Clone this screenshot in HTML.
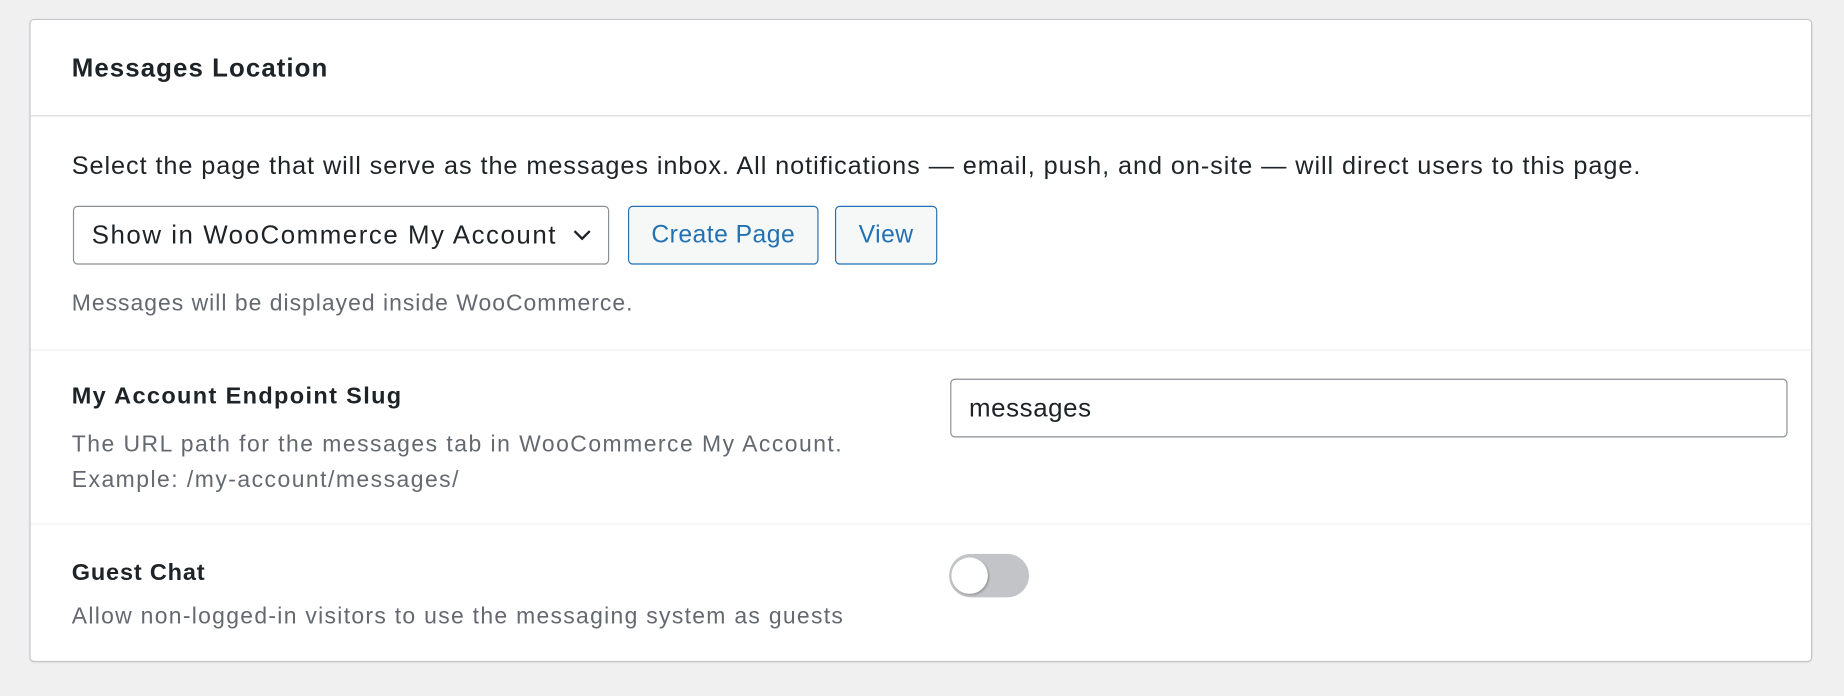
<!DOCTYPE html>
<html><head><meta charset="utf-8"><style>
html,body{margin:0;padding:0;background:#f0f0f1;width:1844px;height:696px;overflow:hidden}
#w{position:absolute;left:0;top:0;width:1568px;height:592px;transform:scale(1.17602);transform-origin:0 0;font-family:"Liberation Sans",sans-serif;color:#1d2327}
.card{position:absolute;left:25px;top:16px;width:1514px;height:545px;background:#fff;border:1px solid #c3c4c7;border-radius:4px;box-shadow:0 1px 1px rgba(0,0,0,.04)}
.abs{position:absolute;white-space:nowrap}
.hr{position:absolute;left:0;right:0;height:1px;background:#e0e0e0}
.btn{position:absolute;border:1px solid #2271b1;border-radius:4px;background:#f6f7f7;color:#2271b1;font-size:21px;letter-spacing:.4px;display:flex;align-items:center;justify-content:center;box-sizing:border-box}
.gray{color:#646970;font-size:19.5px;letter-spacing:.85px}
</style></head><body><div id="w">
<div class="card">
 <div class="abs" style="left:35px;top:28px;font-size:22px;font-weight:bold;letter-spacing:.9px">Messages Location</div>
 <div class="hr" style="top:81px;background:#dcdcde"></div>
 <div class="abs" style="left:35px;top:112px;font-size:21.5px;letter-spacing:.78px">Select the page that will serve as the messages inbox. All notifications — email, push, and on-site — will direct users to this page.</div>
 <div class="abs" style="left:36px;top:158px;border:1px solid #8c8f94;border-radius:4px;font-size:22px;letter-spacing:1.3px;line-height:48px;padding-left:15px;box-sizing:border-box;width:456px;height:50px">Show in WooCommerce My Account
  <svg style="position:absolute;right:14px;top:18px" width="16" height="12" viewBox="0 0 16 12"><path d="M1.5 2.5 L8 9 L14.5 2.5" fill="none" stroke="#1d2327" stroke-width="2"/></svg></div>
 <div class="btn" style="left:508px;top:158px;width:162px;height:50px">Create Page</div>
 <div class="btn" style="left:684px;top:158px;width:87px;height:50px">View</div>
 <div class="abs gray" style="left:35px;top:230px">Messages will be displayed inside WooCommerce.</div>
 <div class="hr" style="top:280px;background:#f0f0f1"></div>
 <div class="abs" style="left:35px;top:309px;font-size:20px;font-weight:bold;letter-spacing:1.15px">My Account Endpoint Slug</div>
 <div class="abs gray" style="left:35px;top:350px;letter-spacing:1.25px">The URL path for the messages tab in WooCommerce My Account.</div>
 <div class="abs gray" style="left:35px;top:380px;letter-spacing:1.25px">Example: /my-account/messages/</div>
 <div class="abs" style="left:782px;top:305px;width:712px;height:50px;border:1px solid #8c8f94;border-radius:4px;box-sizing:border-box;font-size:22px;letter-spacing:.5px;line-height:48px;padding-left:15px">messages</div>
 <div class="hr" style="top:428px;background:#f0f0f1"></div>
 <div class="abs" style="left:35px;top:459px;font-size:20px;font-weight:bold;letter-spacing:.7px">Guest Chat</div>
 <div class="abs gray" style="left:35px;top:496px;letter-spacing:1.1px">Allow non-logged-in visitors to use the messaging system as guests</div>
 <div class="abs" style="left:781px;top:454px;width:68px;height:37px;border-radius:19px;background:#c3c4c7"></div>
 <div class="abs" style="left:783px;top:457px;width:31px;height:31px;border-radius:50%;background:#fff;box-shadow:1px 1px 2px rgba(0,0,0,.25)"></div>
</div>
</div></body></html>
